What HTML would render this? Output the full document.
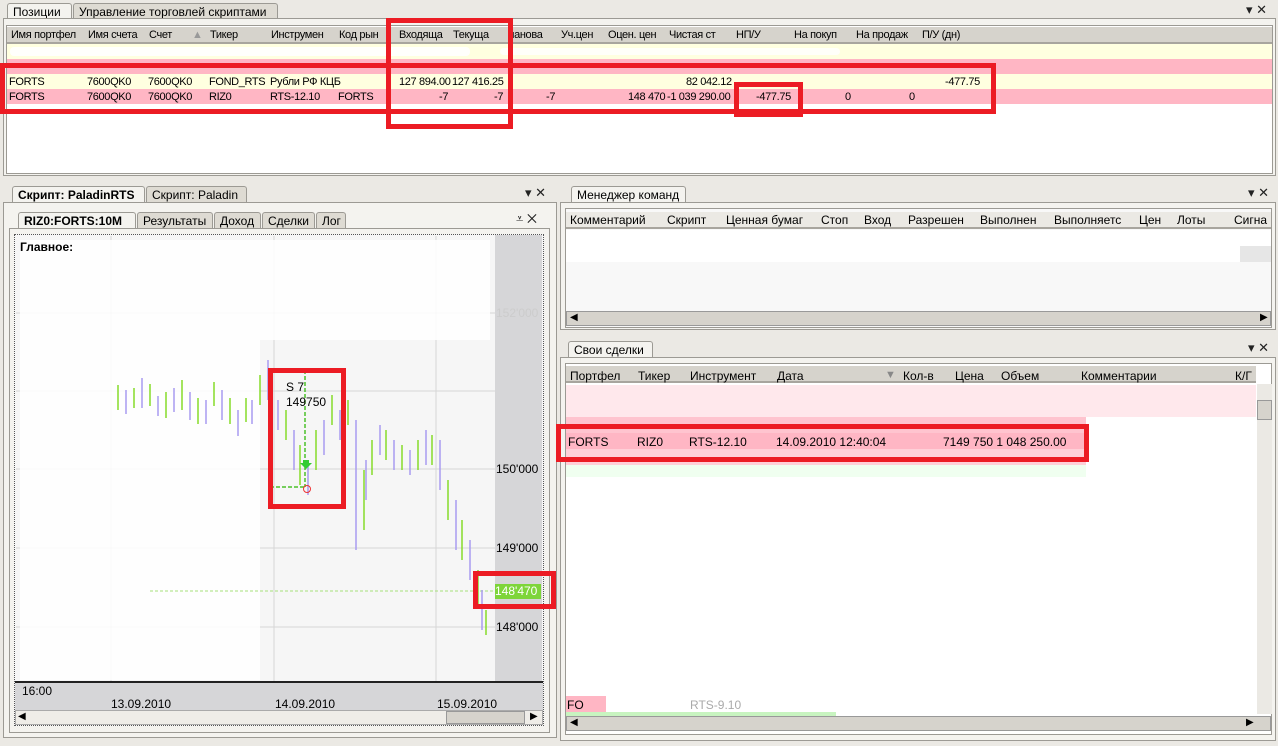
<!DOCTYPE html>
<html><head><meta charset="utf-8"><style>
*{margin:0;padding:0;box-sizing:border-box}
body{width:1278px;height:746px;background:#ebe9e4;font-family:"Liberation Sans",sans-serif;font-size:11px;color:#000;position:relative;overflow:hidden}
.a{position:absolute}
.tab{position:absolute;border:1px solid #9c9a94;border-bottom:none;background:#dedbd3;padding:1px 5px;font-size:12px;white-space:nowrap;border-radius:3px 3px 0 0}
.tab.on{background:#f4f3ef;font-weight:bold}
.pan{position:absolute;border:1px solid #9c9a94;background:#f4f3ef}
.in{position:absolute;background:#fff;border:1px solid #9c9a94}
.hdr{position:absolute;background:#d6d3cc;border-bottom:2px solid #a8a59e;height:17px}
.t{position:absolute;white-space:nowrap}
.tt .t{letter-spacing:-0.35px}
.red{position:absolute;border:5px solid #ec1c24}
.ic{position:absolute;font-size:13px;color:#222}
</style></head><body>

<!-- TOP PANEL -->
<div class="tab on" style="left:7px;top:3px;width:65px;height:16px;font-weight:normal;font-size:12px">Позиции</div>
<div class="tab" style="left:73px;top:3px;width:205px;height:15px">Управление торговлей скриптами</div>
<div class="ic" style="left:1246px;top:2px">▾ ✕</div>
<div class="pan" style="left:3px;top:18px;width:1273px;height:158px"></div>
<div class="in" style="left:6px;top:25px;width:1267px;height:149px"></div>
<div class="hdr" style="left:7px;top:27px;width:1265px"></div>
<div class="a" style="left:7px;top:44px;width:1265px;height:15px;background:#ffffe0"></div>
<div class="a" style="left:7px;top:59px;width:1265px;height:15px;background:#ffb6c4"></div>
<div class="a" style="left:7px;top:74px;width:1265px;height:15px;background:#ffffe0"></div>
<div class="a" style="left:7px;top:89px;width:1265px;height:15px;background:#ffb6c4"></div>
<div class="a" style="left:10px;top:47px;width:460px;height:9px;background:#fff;opacity:.9;border-radius:4px"></div>
<div class="a" style="left:500px;top:48px;width:340px;height:7px;background:#fff;opacity:.8;border-radius:4px"></div>
<div class="tt">
<div class="t" style="left:11px;top:29px">Имя портфел</div>
<div class="t" style="left:88px;top:29px">Имя счета</div>
<div class="t" style="left:149px;top:29px">Счет</div>
<div class="t" style="left:192px;top:29px;color:#999">▲</div>
<div class="t" style="left:210px;top:29px">Тикер</div>
<div class="t" style="left:271px;top:29px">Инструмен</div>
<div class="t" style="left:339px;top:29px">Код рын</div>
<div class="t" style="left:399px;top:29px">Входяща</div>
<div class="t" style="left:453px;top:29px">Текуща</div>
<div class="t" style="left:508px;top:29px">ланова</div>
<div class="t" style="left:561px;top:29px">Уч.цен</div>
<div class="t" style="left:608px;top:29px">Оцен. цен</div>
<div class="t" style="left:669px;top:29px">Чистая ст</div>
<div class="t" style="left:736px;top:29px">НП/У</div>
<div class="t" style="left:794px;top:29px">На покуп</div>
<div class="t" style="left:856px;top:29px">На продаж</div>
<div class="t" style="left:922px;top:29px">П/У (дн)</div>
<div class="t" style="left:9px;top:76px">FORTS</div>
<div class="t" style="left:87px;top:76px">7600QK0</div>
<div class="t" style="left:148px;top:76px">7600QK0</div>
<div class="t" style="left:209px;top:76px">FOND_RTS</div>
<div class="t" style="left:270px;top:76px">Рубли РФ КЦБ</div>
<div class="t" style="left:399px;top:76px">127 894.00</div>
<div class="t" style="left:452px;top:76px">127 416.25</div>
<div class="t" style="left:686px;top:76px">82 042.12</div>
<div class="t" style="left:945px;top:76px">-477.75</div>
<div class="t" style="left:9px;top:91px">FORTS</div>
<div class="t" style="left:87px;top:91px">7600QK0</div>
<div class="t" style="left:148px;top:91px">7600QK0</div>
<div class="t" style="left:209px;top:91px">RIZ0</div>
<div class="t" style="left:270px;top:91px">RTS-12.10</div>
<div class="t" style="left:338px;top:91px">FORTS</div>
<div class="t" style="left:439px;top:91px">-7</div>
<div class="t" style="left:494px;top:91px">-7</div>
<div class="t" style="left:546px;top:91px">-7</div>
<div class="t" style="left:628px;top:91px">148 470</div>
<div class="t" style="left:667px;top:91px">-1 039 290.00</div>
<div class="t" style="left:756px;top:91px">-477.75</div>
<div class="t" style="left:845px;top:91px">0</div>
<div class="t" style="left:909px;top:91px">0</div>
</div>
<div class="red" style="left:0;top:63px;width:996px;height:51px"></div>
<div class="red" style="left:386px;top:18px;width:127px;height:111px"></div>
<div class="red" style="left:734px;top:82px;width:69px;height:35px"></div>

<!-- LEFT PANEL -->
<div class="tab on" style="left:12px;top:186px;width:133px;height:17px">Скрипт: PaladinRTS</div>
<div class="tab" style="left:146px;top:186px;width:101px;height:16px">Скрипт: Paladin</div>
<div class="ic" style="left:525px;top:185px">▾ ✕</div>
<div class="pan" style="left:3px;top:202px;width:554px;height:536px"></div>
<div class="tab on" style="left:18px;top:212px;width:118px;height:17px">RIZ0:FORTS:10M</div>
<div class="tab" style="left:137px;top:212px;width:76px;height:16px">Результаты</div>
<div class="tab" style="left:214px;top:212px;width:47px;height:16px">Доход</div>
<div class="tab" style="left:262px;top:212px;width:53px;height:16px">Сделки</div>
<div class="tab" style="left:316px;top:212px;width:30px;height:16px">Лог</div>
<div class="ic" style="left:516px;top:211px">⩡ ✕</div>
<div class="pan" style="left:9px;top:228px;width:541px;height:505px"></div>
<div class="a" style="left:14px;top:234px;width:530px;height:492px;border:1px dotted #555;background:#f6f6f6"></div>
<div class="a" style="left:495px;top:235px;width:47px;height:446px;background:#d6d6d8"></div>
<div class="a" style="left:15px;top:681px;width:528px;height:29px;background:#d6d6d8;border-top:2px solid #222"></div>
<svg class="a" style="left:0;top:0" width="560" height="746">
<g stroke="#d6d6d6" stroke-width="1">
<line x1="16" y1="313" x2="495" y2="313"/><line x1="16" y1="391" x2="495" y2="391"/><line x1="16" y1="469" x2="495" y2="469"/><line x1="16" y1="548" x2="495" y2="548"/><line x1="16" y1="627" x2="495" y2="627"/>
<line x1="111" y1="236" x2="111" y2="681"/><line x1="274" y1="236" x2="274" y2="681"/><line x1="436" y1="236" x2="436" y2="681"/>
</g>
<rect x="20" y="240" width="240" height="440" fill="#fff" opacity=".85"/>
<rect x="260" y="240" width="230" height="100" fill="#fff" opacity=".85"/>
<line x1="150" y1="591" x2="495" y2="591" stroke="#a6e07a" stroke-dasharray="3,2"/>
<g stroke-width="1.5">
<path stroke="#86dc2a" d="M118 385v25M134 388v20M150 384v22M166 392v26M182 380v30M198 398v26M214 382v24M230 398v26M246 398v24M260 375v30M286 410v30M300 445v40M316 430v40M332 395v30M348 400v25M364 470v60M372 440v35M386 430v30M402 445v25M418 440v30M432 435v30M448 480v40M462 520v40M478 570v35M486 610v25"/>
<path stroke="#a89cf0" d="M126 390v24M142 378v30M158 396v20M174 388v24M190 392v28M206 400v24M222 390v30M238 410v26M252 400v24M268 360v40M278 400v30M294 430v40M308 460v35M324 420v35M340 410v30M356 420v130M366 460v40M380 425v30M394 440v30M410 450v25M426 430v35M440 440v50M456 500v50M470 540v40M482 590v40"/>
</g>
<line x1="305" y1="370" x2="305" y2="487" stroke="#4cc02a" stroke-width="1.5" stroke-dasharray="4,2"/>
<line x1="270" y1="487" x2="305" y2="487" stroke="#4cc02a" stroke-width="1.5" stroke-dasharray="4,2"/>
<circle cx="307" cy="489" r="3.5" fill="none" stroke="#e33"/>
<path d="M303 460h6v3h3l-6 6-6-6h3z" fill="#3c3"/>
</svg>
<div class="t" style="left:20px;top:240px;font-weight:bold;font-size:12px">Главное:</div>
<div class="t" style="left:286px;top:380px;font-size:12px">S 7</div>
<div class="t" style="left:286px;top:395px;font-size:12px">149750</div>
<div class="t" style="left:496px;top:306px;font-size:12px;color:#ccc">152'000</div>
<div class="t" style="left:496px;top:462px;font-size:12px">150'000</div>
<div class="t" style="left:496px;top:541px;font-size:12px">149'000</div>
<div class="t" style="left:496px;top:620px;font-size:12px">148'000</div>
<div class="t" style="left:495px;top:584px;width:46px;height:15px;background:#7ed53a;color:#fff;font-size:12px">148'470</div>
<div class="t" style="left:22px;top:684px;font-size:12px">16:00</div>
<div class="t" style="left:111px;top:697px;font-size:12px">13.09.2010</div>
<div class="t" style="left:275px;top:697px;font-size:12px">14.09.2010</div>
<div class="t" style="left:437px;top:697px;font-size:12px">15.09.2010</div>
<div class="a" style="left:15px;top:710px;width:528px;height:15px;background:#efede8;border:1px solid #aaa"></div>
<div class="a" style="left:446px;top:711px;width:79px;height:13px;background:#d6d3cc;border:1px solid #999"></div>
<div class="t" style="left:18px;top:711px;font-size:10px">◀</div>
<div class="t" style="left:530px;top:711px;font-size:10px">▶</div>
<div class="red" style="left:268px;top:368px;width:78px;height:141px"></div>
<div class="red" style="left:473px;top:571px;width:83px;height:38px"></div>

<!-- RIGHT TOP -->
<div class="tab" style="left:571px;top:186px;width:115px;height:17px;background:#f4f3ef">Менеджер команд</div>
<div class="ic" style="left:1248px;top:185px">▾ ✕</div>
<div class="pan" style="left:560px;top:202px;width:716px;height:128px"></div>
<div class="in" style="left:565px;top:208px;width:707px;height:120px;background:#f8f8f8"></div>
<div class="hdr" style="left:566px;top:212px;width:705px;background:#ebe9e4"></div>
<div class="t" style="left:570px;top:213px;font-size:12px">Комментарий</div>
<div class="t" style="left:667px;top:213px;font-size:12px">Скрипт</div>
<div class="t" style="left:726px;top:213px;font-size:12px">Ценная бумаг</div>
<div class="t" style="left:821px;top:213px;font-size:12px">Стоп</div>
<div class="t" style="left:864px;top:213px;font-size:12px">Вход</div>
<div class="t" style="left:908px;top:213px;font-size:12px">Разрешен</div>
<div class="t" style="left:980px;top:213px;font-size:12px">Выполнен</div>
<div class="t" style="left:1054px;top:213px;font-size:12px">Выполняетс</div>
<div class="t" style="left:1139px;top:213px;font-size:12px">Цен</div>
<div class="t" style="left:1177px;top:213px;font-size:12px">Лоты</div>
<div class="t" style="left:1234px;top:213px;font-size:12px">Сигна</div>
<div class="a" style="left:566px;top:230px;width:705px;height:32px;background:#fff"></div>
<div class="a" style="left:1240px;top:246px;width:31px;height:16px;background:#e6e6e6"></div>
<div class="a" style="left:566px;top:311px;width:705px;height:15px;background:#d6d3cc;border:1px solid #999"></div>
<div class="t" style="left:570px;top:312px;font-size:10px">◀</div>
<div class="t" style="left:1260px;top:312px;font-size:10px">▶</div>

<!-- RIGHT BOTTOM -->
<div class="tab" style="left:568px;top:341px;width:85px;height:18px;background:#f4f3ef">Свои сделки</div>
<div class="ic" style="left:1248px;top:340px">▾ ✕</div>
<div class="pan" style="left:560px;top:357px;width:716px;height:384px"></div>
<div class="in" style="left:565px;top:363px;width:707px;height:372px"></div>
<div class="hdr" style="left:566px;top:366px;width:690px;background:#d6d3cc"></div>
<div class="t" style="left:570px;top:369px;font-size:12px">Портфел</div>
<div class="t" style="left:638px;top:369px;font-size:12px">Тикер</div>
<div class="t" style="left:690px;top:369px;font-size:12px">Инструмент</div>
<div class="t" style="left:777px;top:369px;font-size:12px">Дата</div>
<div class="t" style="left:885px;top:369px;color:#888">▼</div>
<div class="t" style="left:903px;top:369px;font-size:12px">Кол-в</div>
<div class="t" style="left:955px;top:369px;font-size:12px">Цена</div>
<div class="t" style="left:1001px;top:369px;font-size:12px">Объем</div>
<div class="t" style="left:1081px;top:369px;font-size:12px">Комментарии</div>
<div class="t" style="left:1235px;top:369px;font-size:12px">К/Г</div>
<div class="a" style="left:566px;top:385px;width:690px;height:32px;background:#ffe8ec"></div>
<div class="a" style="left:566px;top:417px;width:520px;height:16px;background:#ffc4cf"></div>
<div class="a" style="left:566px;top:433px;width:520px;height:16px;background:#ffb6c4"></div>
<div class="a" style="left:566px;top:449px;width:520px;height:16px;background:#ffd0d8"></div>
<div class="a" style="left:566px;top:465px;width:520px;height:12px;background:#f0fff0"></div>
<div class="a" style="left:566px;top:696px;width:40px;height:16px;background:#ffb6c4"></div>
<div class="a" style="left:566px;top:712px;width:270px;height:4px;background:#c8f4c0"></div>
<div class="t" style="left:567px;top:698px;font-size:12px">FO</div>
<div class="t" style="left:690px;top:698px;font-size:12px;color:#aaa">RTS-9.10</div>
<div class="t" style="left:568px;top:435px;font-size:12px">FORTS</div>
<div class="t" style="left:637px;top:435px;font-size:12px">RIZ0</div>
<div class="t" style="left:689px;top:435px;font-size:12px">RTS-12.10</div>
<div class="t" style="left:776px;top:435px;font-size:12px">14.09.2010 12:40:04</div>
<div class="t" style="left:943px;top:435px;font-size:12px">7149 750 1 048 250.00</div>
<div class="a" style="left:1257px;top:384px;width:15px;height:330px;background:#ebe9e4"></div>
<div class="a" style="left:1257px;top:400px;width:15px;height:20px;background:#d6d3cc;border:1px solid #999"></div>
<div class="a" style="left:566px;top:716px;width:705px;height:15px;background:#d6d3cc;border:1px solid #999"></div>
<div class="t" style="left:570px;top:717px;font-size:10px">◀</div>
<div class="t" style="left:1246px;top:717px;font-size:10px">▶</div>
<div class="red" style="left:556px;top:424px;width:533px;height:38px"></div>
</body></html>
